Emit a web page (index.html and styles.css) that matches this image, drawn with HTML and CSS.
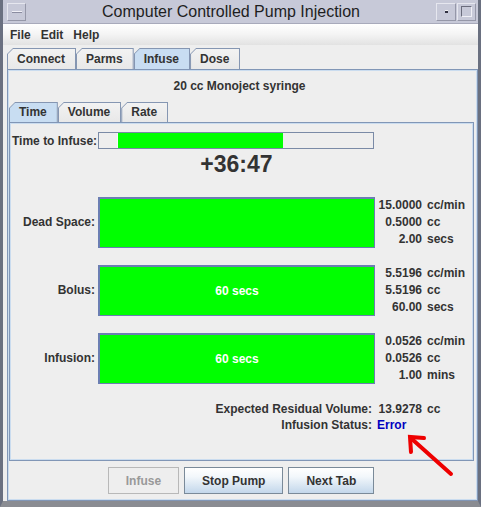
FILE: index.html
```html
<!DOCTYPE html>
<html>
<head>
<meta charset="utf-8">
<link rel="stylesheet" href="styles.css">
</head>
<body>
<div class="window">
  <div class="titlebar">
    <span class="tb-btn tb-menu"><span class="dash"></span></span>
    <span class="title">Computer Controlled Pump Injection</span>
    <span class="tb-btn tb-min"><span class="dot"></span></span>
    <span class="tb-btn tb-max"><span class="sq"></span></span>
  </div>
  <div class="menubar">
    <span class="menu">File</span><span class="menu">Edit</span><span class="menu">Help</span>
  </div>
  <div class="outer">
    <div class="tabrow">
      <div class="tab"><div class="tab-in">Connect</div></div>
      <div class="tab"><div class="tab-in">Parms</div></div>
      <div class="tab sel"><div class="tab-in">Infuse</div></div>
      <div class="tab"><div class="tab-in">Dose</div></div>
    </div>
    <div class="panel">
      <div class="syringe">20 cc Monoject syringe</div>
      <div class="tabrow inner-row">
        <div class="tab sel"><div class="tab-in">Time</div></div>
        <div class="tab"><div class="tab-in">Volume</div></div>
        <div class="tab"><div class="tab-in">Rate</div></div>
      </div>
      <div class="inner-panel">
        <div class="grid time-row">
          <div class="tlabel">Time to Infuse:</div>
          <div class="progress"><div class="pfill" style="margin-left:18px;width:166px"></div></div>
        </div>
        <div class="grid">
          <div></div>
          <div class="bigtime">+36:47</div>
        </div>

        <div class="grid row first">
          <div class="rlabel">Dead Space:</div>
          <div class="bar"></div>
          <div class="vals"><div>15.0000</div><div>0.5000</div><div>2.00</div></div>
          <div class="units"><div>cc/min</div><div>cc</div><div>secs</div></div>
        </div>
        <div class="grid row">
          <div class="rlabel">Bolus:</div>
          <div class="bar">60 secs</div>
          <div class="vals"><div>5.5196</div><div>5.5196</div><div>60.00</div></div>
          <div class="units"><div>cc/min</div><div>cc</div><div>secs</div></div>
        </div>
        <div class="grid row">
          <div class="rlabel">Infusion:</div>
          <div class="bar">60 secs</div>
          <div class="vals"><div>0.0526</div><div>0.0526</div><div>1.00</div></div>
          <div class="units"><div>cc/min</div><div>cc</div><div>mins</div></div>
        </div>

        <div class="grid summary first-sum">
          <div class="slabel">Expected Residual Volume:</div>
          <div class="sval">13.9278</div>
          <div class="sunit">cc</div>
        </div>
        <div class="grid summary">
          <div class="slabel">Infusion Status:</div>
          <div class="status">Error</div>
        </div>
      </div>
      <div class="buttons">
        <button class="btn disabled">Infuse</button>
        <button class="btn">Stop Pump</button>
        <button class="btn">Next Tab</button>
      </div>
    </div>
  </div>
  <svg class="arrow" width="481" height="507" viewBox="0 0 481 507">
    <line x1="451" y1="474" x2="413" y2="440" stroke="#ee0000" stroke-width="4" stroke-linecap="round"/>
    <polyline points="411,452 410,437 424,438" fill="none" stroke="#ee0000" stroke-width="4" stroke-linecap="round" stroke-linejoin="miter"/>
  </svg>
</div>
</body>
</html>
```

FILE: styles.css
```css
* { box-sizing: border-box; }
html, body { margin: 0; padding: 0; }
body {
  width: 481px;
  height: 507px;
  background: #d8d8d8;
  font-family: "Liberation Sans", Arial, sans-serif;
  font-size: 12px;
  font-weight: bold;
  color: #333333;
}
.window {
  position: relative;
  width: 481px;
  height: 507px;
  background: #eeeeee;
  border-left: 3px solid #6a7080;
  border-right: 3px solid #6a7080;
  border-bottom: 6px solid #8a8c92;
  display: flex;
  flex-direction: column;
}
.titlebar {
  height: 24px;
  background: #c7c9d8;
  border-bottom: 1px solid #a8aabb;
  display: flex;
  align-items: center;
  padding: 0 2px 0 4px;
}
.tb-btn {
  height: 18px;
  border: 1px solid #e6e7ef;
  border-right-color: #9597a8;
  border-bottom-color: #9597a8;
  display: flex;
  align-items: center;
  justify-content: center;
}
.tb-menu { width: 19px; }
.dash { width: 10px; height: 2px; background: #f0f0f6; border-bottom: 1px solid #8a8ca0; }
.title {
  flex: 1;
  text-align: center;
  font-weight: normal;
  font-size: 16px;
  color: #1e1e1e;
}
.tb-min { width: 20px; margin-right: 1px; }
.dot { width: 3px; height: 3px; background: #303040; border-top: 1px solid #f0f0f0; }
.tb-max { width: 19px; }
.sq { width: 11px; height: 11px; border: 1px solid #6a6c7c; border-right-color: #f0f0f6; border-bottom-color: #f0f0f6; }
.menubar {
  height: 21px;
  background: linear-gradient(#ffffff, #f4f4f4 50%, #e2e2e2);
  display: flex;
  align-items: center;
  padding-left: 2px;
  padding-top: 1px;
}
.menu { padding: 0 5px; }
.outer {
  flex: 1;
  display: flex;
  flex-direction: column;
  padding: 3px 0 0 4px;
}
.tabrow { display: flex; height: 21px; }
.tab {
  background: #8596b2;
  padding: 1px 1px 0 1px;
  clip-path: polygon(6px 0, 100% 0, 100% 100%, 0 100%, 0 6px);
}
.tab-in {
  height: 100%;
  background: linear-gradient(#f2f2f2, #e8e8e8);
  clip-path: polygon(5px 0, 100% 0, 100% 100%, 0 100%, 0 5px);
  padding: 0 10px 0 9px;
  line-height: 20px;
}
.tab.sel .tab-in { background: #c8ddf2; }
.panel {
  flex: 1;
  border: 1px solid #8196b6;
  box-shadow: inset 0 0 0 1px #cadcef;
  display: flex;
  flex-direction: column;
  padding: 0 3px 0 1px;
}
.syringe {
  height: 32px;
  line-height: 32px;
  text-align: center;
  padding-right: 4px;
}
.inner-row { height: 20px; }
.inner-row .tab-in { line-height: 19px; }
.inner-panel {
  height: 339px;
  border: 1px solid #8196b6;
  box-shadow: inset 0 0 0 1px #cadcef;
  padding-top: 9px;
}
.grid {
  display: grid;
  grid-template-columns: 88px 277px 47px 1fr;
}
.time-row { height: 17px; align-items: center; }
.tlabel { padding-left: 2px; white-space: nowrap; }
.progress {
  width: 276px;
  height: 17px;
  border: 1px solid #7a8aa6;
  background: #eeeeee;
  display: flex;
}
.pfill { background: #00ff00; height: 100%; border-left: 1px solid #f6f6fa; }
.bigtime {
  height: 28px;
  line-height: 28px;
  margin-top: 1px;
  text-align: center;
  font-size: 23px;
  color: #333333;
}
.row { height: 51px; margin-top: 17px; }
.row.first { margin-top: 19px; }
.rlabel {
  text-align: right;
  padding-right: 3px;
  line-height: 51px;
}
.bar {
  background: #00ff00;
  border: 2px solid #6b7eb2;
  border-bottom-width: 1px;
  border-right-width: 1px;
  color: #ffffff;
  text-align: center;
  line-height: 48px;
}
.vals, .units { line-height: 17px; }
.vals { text-align: right; }
.units { padding-left: 5px; }
.summary { line-height: 16px; }
.first-sum { margin-top: 17px; }
.slabel { grid-column: 1 / 3; text-align: right; padding-right: 3px; }
.sval { text-align: right; }
.sunit { padding-left: 5px; }
.status { padding-left: 2px; color: #0000c0; grid-column: 3 / 5; }
.buttons {
  display: flex;
  justify-content: center;
  gap: 5px;
  margin-top: 6px;
  padding-right: 1px;
}
.btn {
  height: 27px;
  padding: 0 17px;
  font-family: "Liberation Sans", Arial, sans-serif;
  font-size: 12px;
  font-weight: bold;
  color: #333333;
  border: 1px solid #7a8a99;
  background: linear-gradient(#ffffff 0%, #f2f7fb 35%, #c3d7eb 100%);
}
.btn.disabled {
  color: #999999;
  border-color: #b8b8b8;
  background: #eeeeee;
}
.arrow {
  position: absolute;
  left: -3px;
  top: 0;
  pointer-events: none;
}
```
